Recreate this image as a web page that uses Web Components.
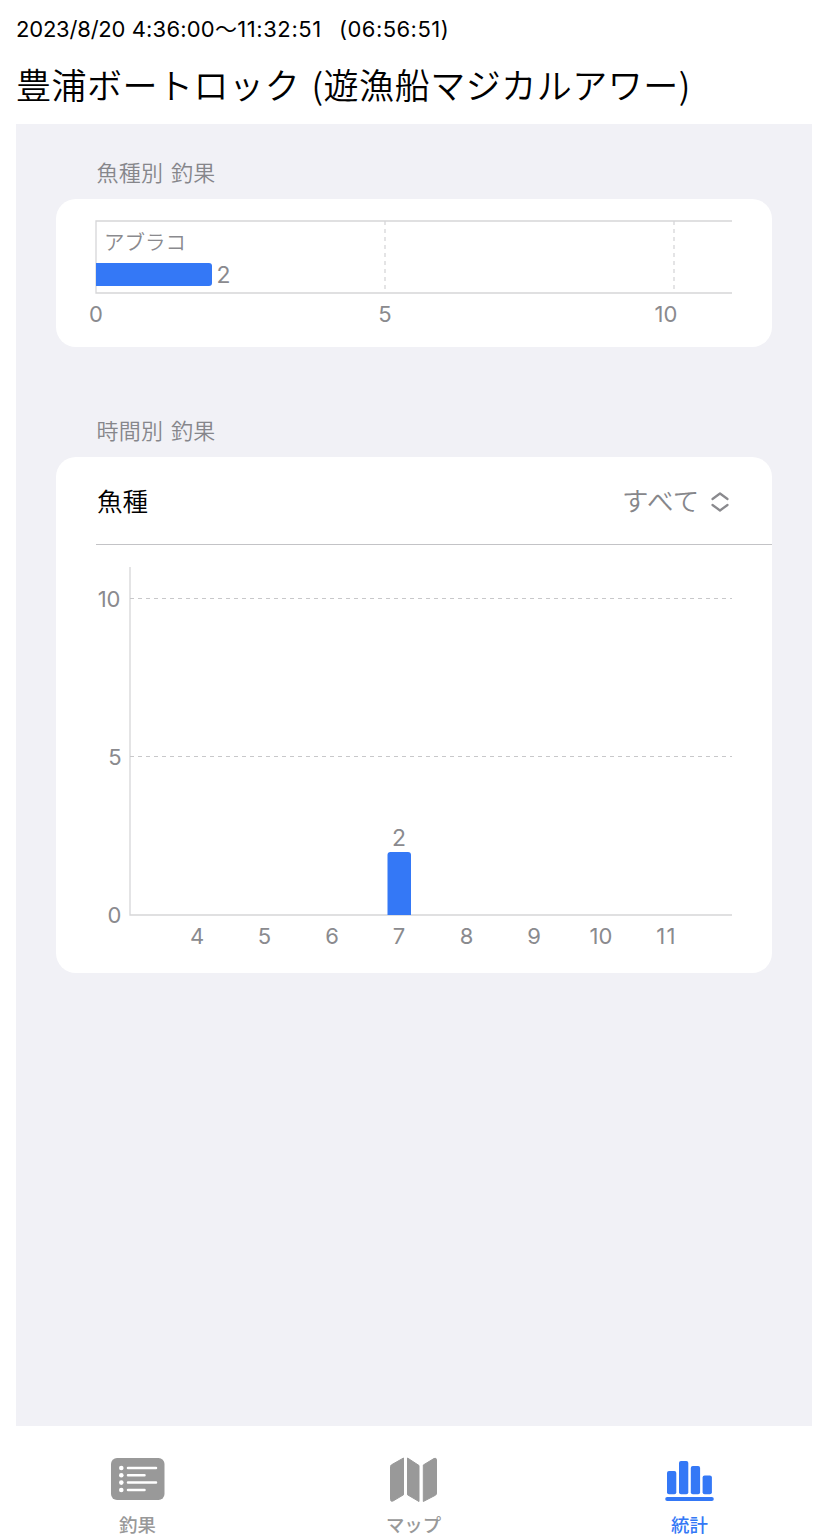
<!DOCTYPE html>
<html lang="ja">
<head>
<meta charset="utf-8">
<title>豊浦ボートロック</title>
<style>
  html, body { margin: 0; background: #fff; }
  body { font-family: Inter, "Noto Sans CJK JP", sans-serif; color: #000; }
</style>
</head>
<body>
<trip-page></trip-page>
<script>
const define = (name, html, init) => {
  const tpl = document.createElement('template');
  tpl.innerHTML = html;
  customElements.define(name, class extends HTMLElement {
    constructor() {
      super();
      this.attachShadow({ mode: 'open' }).appendChild(tpl.content.cloneNode(true));
    }
    connectedCallback() { if (init) init(this, this.shadowRoot); }
  });
};

define('trip-header', `
  <style>
    :host { display: flex; flex-direction: column; height: 124px; padding: 0 16px; box-sizing: border-box; white-space: pre; }
    .time { padding-top: 14px; height: 32px; line-height: 31px; font-size: 22px; letter-spacing: 0.2px; font-weight: 400; }
    .title { margin-top: 13px; height: 50px; line-height: 50px; font-size: 35px; letter-spacing: 0.52px; word-spacing: 3px; font-weight: 350; font-family: "Noto Sans CJK JP", sans-serif; }
  </style>
  <div class="time"><slot name="time"></slot></div>
  <div class="title"><slot></slot></div>`);

define('stat-section', `
  <style>
    :host { display: block; }
    .head { height: 28px; line-height: 28px; padding-left: 40.500px; margin-bottom: 12px; padding-top: 1px; font-size: 22px; letter-spacing: 0.3px; word-spacing: 1px; color: #86868b; font-weight: 350; white-space: pre; }
    .card { background: #fff; border-radius: 20px; overflow: hidden; }
  </style>
  <div class="head"></div>
  <div class="card"><slot></slot></div>`,
  (el, root) => { root.querySelector('.head').textContent = el.getAttribute('heading'); });

define('species-chart', `
  <style>
    :host { display: block; height: 148px; }
    svg { display: block; }
    text { font-size: 22px; font-weight: 400; fill: #8a8a8e; }
  </style>
  <svg width="716" height="148" viewBox="56 199 716 148">
    <g fill="none" stroke="#d6d6d8" stroke-width="1.300">
      <path d="M732 221H96V293H732"/>
      <path d="M385 221V293M674 221V293" stroke-dasharray="4 4"/>
    </g>
    <path d="M96 263h113q3 0 3 3v17q0 3-3 3H96z" fill="#3478f6"/>
    <text x="104" y="250" style="font-size:20.5px;font-weight:350">アブラコ</text>
    <text x="216.500" y="283" style="font-size:23px">2</text>
    <g text-anchor="middle"><text x="96" y="322">0</text><text x="385" y="322">5</text><text x="666" y="322">10</text></g>
  </svg>`);

define('picker-row', `
  <style>
    :host { display: flex; align-items: center; height: 88px; box-sizing: border-box; margin-left: 40px; padding: 0 42px 0 1px; border-bottom: 1px solid #c3c3c6; font-size: 25.5px; font-weight: 350; }
    span { margin-top: -2px; }
    .value { margin-left: auto; color: #86868a; font-size: 26.500px; letter-spacing: 0.300px; }
    svg { margin-left: 10.500px; margin-top: 2px; }
  </style>
  <span><slot></slot></span>
  <span class="value"><slot name="value"></slot></span>
  <svg width="20" height="20" viewBox="0 0 20 20" fill="none" stroke="#8a8a8e" stroke-width="2.200" stroke-linecap="round" stroke-linejoin="round"><path d="M2.500 7 10 1.500 17.500 7M2.500 13 10 18.500 17.500 13"/></svg>`);

define('hourly-chart', `
  <style>
    :host { display: block; height: 427.500px; }
    svg { display: block; }
    text { font-size: 22px; font-weight: 400; fill: #8a8a8e; }
  </style>
  <svg width="716" height="427" viewBox="56 545 716 427">
    <g fill="none" stroke="#d6d6d8" stroke-width="1.300">
      <path d="M130 567V915H732"/>
      <path d="M130 598.500H732M130 756.500H732" stroke-width="1" stroke="#c8c8ca" stroke-dasharray="4 4"/>
    </g>
    <path d="M387.500 915v-60q0-3 3-3h17.500q3 0 3 3v60z" fill="#3478f6"/>
    <g text-anchor="end"><text x="120.500" y="607">10</text><text x="121.500" y="765">5</text><text x="121.500" y="923">0</text></g>
    <g text-anchor="middle">
      <text x="399" y="846" style="font-size:23px">2</text>
      <text x="197" y="944">4</text><text x="264.500" y="944">5</text><text x="332" y="944">6</text><text x="399" y="944">7</text>
      <text x="466.500" y="944">8</text><text x="534" y="944">9</text><text x="601" y="944">10</text><text x="666.500" y="944" letter-spacing="1.200">11</text>
    </g>
  </svg>`);

define('tab-item', `
  <style>
    :host { display: flex; flex: 1; flex-direction: column; align-items: center; padding-top: 28px; color: #999; }
    :host([active]) { color: #3478f6; }
    .icon { height: 50px; display: flex; }
    .label { margin-top: 9px; height: 24px; line-height: 24px; font-size: 18.400px; font-weight: 500; margin-left: -1px; }
  </style>
  <div class="icon"><slot name="icon"></slot></div>
  <div class="label"><slot></slot></div>`);

define('tab-bar', `
  <style>:host { display: flex; height: 114px; overflow: hidden; } svg { display: block; }</style>
  <tab-item>
    <svg slot="icon" width="60" height="50" viewBox="108 1454 60 50">
      <rect x="111" y="1458" width="53.500" height="42" rx="6" fill="currentColor"/>
      <g fill="#fff"><circle cx="121.300" cy="1468" r="2.300"/><circle cx="121.300" cy="1475.300" r="2.300"/><circle cx="121.300" cy="1482.600" r="2.300"/><circle cx="121.300" cy="1490" r="2.300"/></g>
      <path d="M128 1468h28M128 1475.300h16.500M128 1482.600h28M128 1490h16.500" stroke="#fff" stroke-width="2.500" stroke-linecap="round"/>
    </svg>釣果
  </tab-item>
  <tab-item>
    <svg slot="icon" width="60" height="50" viewBox="384 1454 60 50">
      <path fill="currentColor" stroke="currentColor" stroke-linejoin="round" d="M403.500 1458V1494.800L393 1501q-2.500 1-2.500-1.500V1466.500q0-1 1-1.700zM407.500 1458 419 1465.500V1501.500L407.500 1494.800zM423.300 1465 434 1458.500q2.500-1 2.500 1.500V1493q0 1.500-1 2.200L423.300 1501.500z"/>
    </svg>マップ
  </tab-item>
  <tab-item active>
    <svg slot="icon" width="60" height="50" viewBox="660 1454 60 50" fill="currentColor">
      <rect x="667" y="1471" width="9.300" height="23.300" rx="2"/><rect x="679" y="1461" width="9.300" height="33.300" rx="2"/>
      <rect x="690.800" y="1466" width="9.300" height="28.300" rx="2"/><rect x="702.600" y="1475.500" width="9.300" height="18.800" rx="2"/>
      <rect x="665.200" y="1497" width="48.600" height="4" rx="2"/>
    </svg>統計
  </tab-item>`);

define('trip-page', `
  <style>
    :host { display: flex; flex-direction: column; width: 828px; height: 1540px; overflow: hidden; }
    main { flex: 1; margin: 0 16px; padding: 34px 40px 0; background: #f1f1f6; }
    stat-section + stat-section { margin-top: 69px; }
    .date { letter-spacing: -0.2px; }
    .end { letter-spacing: 0.600px; }
    .span { letter-spacing: 0.450px; margin-left: -2px; }
  </style>
  <trip-header><span slot="time"><span class="date">2023/8/20</span> 4:36:00〜<span class="end">11:32:51</span>&nbsp;&nbsp; <span class="span">(06:56:51)</span></span>豊浦ボートロック (遊漁船マジカルアワー)</trip-header>
  <main>
    <stat-section heading="魚種別 釣果"><species-chart></species-chart></stat-section>
    <stat-section heading="時間別 釣果">
      <picker-row>魚種<span slot="value">すべて</span></picker-row>
      <hourly-chart></hourly-chart>
    </stat-section>
  </main>
  <tab-bar></tab-bar>`);
</script>
</body>
</html>
